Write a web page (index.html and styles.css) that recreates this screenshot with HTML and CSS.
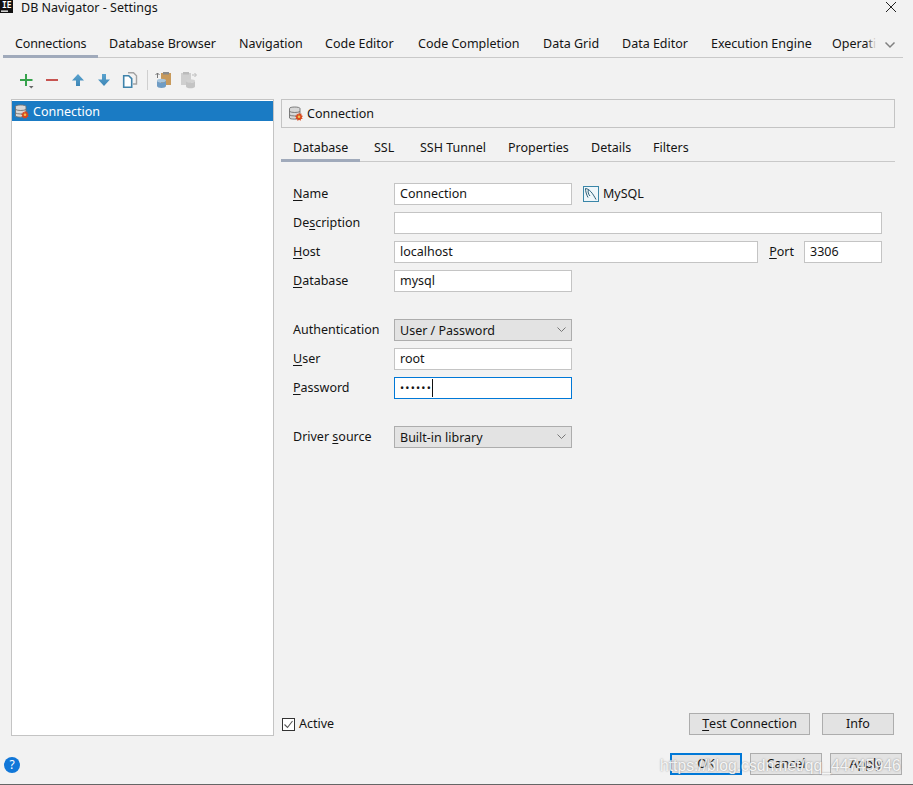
FILE: index.html
```html
<!DOCTYPE html>
<html lang="en">
<head>
<meta charset="utf-8">
<title>DB Navigator - Settings</title>
<link rel="stylesheet" href="styles.css">
</head>
<body>
<svg class="sprites" width="0" height="0">
  <defs>
    <linearGradient id="blue" x1="0" y1="0" x2="0" y2="1"><stop offset="0" stop-color="#5aa3cf"/><stop offset="1" stop-color="#3d86b6"/></linearGradient>
    <g id="db">
      <path d="M.5 2.500C.5.500 11 .500 11 2.500v9.500c0 1.500-10.500 1.500-10.500 0z" fill="#d8d8d8" stroke="#6f6f6f" stroke-width=".9"/>
      <path d="M.5 5.500c2 1.300 8.500 1.300 10.500 0M.5 9c2 1.300 8.500 1.300 10.500 0" stroke="#6f6f6f" stroke-width=".9" fill="none"/>
      <path d="M10 6.500l.9 1.600 1.700-.6-.3 1.800 1.700.7-1.300 1.200 1 1.500-1.800.2-.2 1.800-1.700-1-1.400 1.200-.4-1.800-1.800-.1.900-1.600-1.300-1.300 1.800-.5-.1-1.800 1.600.8z" fill="#d8481e"/>
      <circle cx="10" cy="10.800" r="1.300" fill="#f0c050"/>
    </g>
  </defs>
</svg>
<div class="dialog">
  <header class="titlebar">
    <svg class="app-logo" width="13" height="13" viewBox="0 0 13 13"><rect width="13" height="13" fill="#111"/><rect x="1" y="10.500" width="7" height="1.300" fill="#fff"/></svg>
    <span class="app-logo-text">IE</span>
    <span class="title">DB Navigator - Settings</span>
    <svg class="close" width="12" height="12" viewBox="0 0 12 12"><path d="M1 1l10 10M11 1L1 11" stroke="#222" stroke-width="1" fill="none"/></svg>
  </header>

  <nav class="tabs main-tabs">
    <span class="tab active">Connections</span>
    <span class="tab">Database Browser</span>
    <span class="tab">Navigation</span>
    <span class="tab">Code Editor</span>
    <span class="tab">Code Completion</span>
    <span class="tab">Data Grid</span>
    <span class="tab">Data Editor</span>
    <span class="tab">Execution Engine</span>
    <span class="tab faded">Operati</span>
    <svg class="more" width="12" height="8" viewBox="0 0 12 8"><path d="M1.500 1.500L6 6l4.500-4.500" stroke="#808080" stroke-width="1.500" fill="none"/></svg>
  </nav>

  <div class="toolbar">
    <svg class="ti" width="18" height="18" viewBox="0 0 18 18"><path d="M9 3v12M3 9h12.500" stroke="#36a24c" stroke-width="2"/><path d="M12 15h4.500l-2.250 2.500z" fill="#666"/></svg>
    <svg class="ti" width="18" height="18" viewBox="0 0 18 18"><path d="M3 9h12" stroke="#c75450" stroke-width="2"/></svg>
    <svg class="ti" width="18" height="18" viewBox="0 0 18 18"><path d="M9 3l6 6.500h-4V15H7V9.500H3z" fill="url(#blue)"/></svg>
    <svg class="ti" width="18" height="18" viewBox="0 0 18 18"><path d="M7 3h4v5.500h4L9 15 3 8.500h4z" fill="url(#blue)"/></svg>
    <svg class="ti" width="18" height="18" viewBox="0 0 18 18"><path d="M7 1.700h5.500l3 3V13H12" fill="none" stroke="#a2a2a2" stroke-width="1.400"/><path d="M2.700 4.700h5l3 3v8.600h-8z" fill="#fff" stroke="#3f83ab" stroke-width="1.600"/></svg>
    <span class="tool-sep"></span>
    <svg class="ti" width="18" height="18" viewBox="0 0 18 18"><rect x="6" y="2" width="10" height="12" fill="#c89a5c"/><rect x="8" y="1" width="6" height="2.500" fill="#8a8a8a"/><path d="M.5 4L2.500 2l2 2M2.500 2v5" stroke="#777" stroke-width="1" fill="none"/><ellipse cx="6.500" cy="9.500" rx="4.500" ry="1.800" fill="#a8c6de"/><path d="M2 9.500V15c0 1 2 2 4.500 2s4.500-1 4.500-2V9.500c0 1-2 2-4.500 2S2 10.500 2 9.500z" fill="#6f9cc4"/></svg>
    <svg class="ti" width="18" height="18" viewBox="0 0 18 18"><rect x="0" y="2" width="10" height="12" fill="#cfcfcf"/><rect x="2" y="1" width="6" height="2.500" fill="#bbb"/><path d="M11 4h4M13.500 2l2 2-2 2" stroke="#bbb" stroke-width="1" fill="none"/><ellipse cx="9.500" cy="10" rx="4.500" ry="1.800" fill="#d2d2d2"/><path d="M5 10v5.500c0 1 2 1.800 4.500 1.800s4.500-.8 4.500-1.800V10c0 1-2 1.800-4.500 1.800S5 11 5 10z" fill="#c4c4c4"/></svg>
  </div>

  <div class="body">
    <aside class="conn-list">
      <div class="conn-row">
        <svg class="db-icon" width="15" height="15" viewBox="0 0 15 15"><use href="#db"/></svg>
        <span class="conn-name">Connection</span>
      </div>
    </aside>

    <main class="detail">
      <div class="detail-head">
        <svg class="db-icon" width="15" height="15" viewBox="0 0 15 15"><use href="#db"/></svg>
        <span>Connection</span>
      </div>

      <nav class="tabs sub-tabs">
        <span class="tab active">Database</span>
        <span class="tab">SSL</span>
        <span class="tab">SSH Tunnel</span>
        <span class="tab">Properties</span>
        <span class="tab">Details</span>
        <span class="tab">Filters</span>
      </nav>

      <form class="form">
        <div class="row">
          <label class="lbl"><u>N</u>ame</label>
          <span class="field short">Connection</span>
          <svg class="mysql" width="16" height="16" viewBox="0 0 16 16"><rect x=".5" y=".5" width="15" height="15" fill="#eef6fa" stroke="#3a86a8"/><path d="M2.500 2.500c4 .5 7 4.500 10.500 11M2.500 2.500c0 3 1 6 2.500 9M5.500 3.500c-1 2 0 5 1.500 6.500" stroke="#2c5f78" stroke-width="1" fill="none"/></svg>
          <span class="dbtype">MySQL</span>
        </div>
        <div class="row">
          <label class="lbl">De<u>s</u>cription</label>
          <span class="field grow"></span>
        </div>
        <div class="row">
          <label class="lbl"><u>H</u>ost</label>
          <span class="field grow">localhost</span>
          <label class="lbl port-lbl"><u>P</u>ort</label>
          <span class="field port">3306</span>
        </div>
        <div class="row">
          <label class="lbl"><u>D</u>atabase</label>
          <span class="field short">mysql</span>
        </div>

        <div class="row section">
          <label class="lbl">Authentication</label>
          <span class="field short select"><span class="sel-text">User / Password</span><svg class="chev" width="9" height="6" viewBox="0 0 9 6"><path d="M.5.500L4.500 4.500 8.500.500" stroke="#777" fill="none"/></svg></span>
        </div>
        <div class="row">
          <label class="lbl"><u>U</u>ser</label>
          <span class="field short">root</span>
        </div>
        <div class="row">
          <label class="lbl"><u>P</u>assword</label>
          <span class="field short focus"><span class="dots">••••••</span><span class="caret"></span></span>
        </div>

        <div class="row section">
          <label class="lbl">Driver <u>s</u>ource</label>
          <span class="field short select"><span class="sel-text">Built-in library</span><svg class="chev" width="9" height="6" viewBox="0 0 9 6"><path d="M.5.500L4.500 4.500 8.500.500" stroke="#777" fill="none"/></svg></span>
        </div>
      </form>

      <div class="detail-foot">
        <label class="check"><svg width="13" height="13" viewBox="0 0 13 13"><rect x=".5" y=".5" width="12" height="12" fill="#fff" stroke="#333"/><path d="M2.500 6.500l3 3 5-6.500" stroke="#555" stroke-width="1.100" fill="none"/></svg>Active</label>
        <span class="btn test"><u>T</u>est Connection</span>
        <span class="btn info">Info</span>
      </div>
    </main>
  </div>

  <footer class="footer">
    <span class="help">?</span>
    <span class="btn act default">OK</span>
    <span class="btn act">Cancel</span>
    <span class="btn act">Apply</span>
    <span class="watermark">https://blog.csdn.net/qq_44745946</span>
  </footer>
</div>
</body>
</html>
```
FILE: styles.css
```css
* { box-sizing: border-box; }
html, body { margin: 0; padding: 0; }
body {
  width: 913px;
  height: 785px;
  overflow: hidden;
  background: #f2f2f2;
  color: #141414;
  font: 12.5px/16px "Noto Sans", sans-serif;
}
u { text-underline-offset: 2px; }
.sprites { position: absolute; }
.dialog {
  position: relative;
  display: flex;
  flex-direction: column;
  height: 785px;
  border-bottom: 1px solid #666;
}
.titlebar {
  position: relative;
  display: flex;
  align-items: flex-start;
  height: 30px;
  padding: 0 16px 0 0;
  flex: none;
}
.app-logo { flex: none; }
.app-logo-text {
  position: absolute;
  left: 2px;
  top: 1px;
  color: #fff;
  font: bold 8px/9px "DejaVu Sans Mono", monospace;
}
.title { margin: 0 0 0 8px; font-size: 12.5px; line-height: 15px; }
.close { margin: 1px 0 0 auto; }
.tabs { display: grid; flex: none; }
.tab { white-space: nowrap; }
.main-tabs {
  grid-template-columns: 106px 130px 86px 93px 125px 79px 89px 121px 52px 12px;
  height: 28px;
  margin: 0 10px 0 3px;
  border-bottom: 1px solid #c9c9c9;
}
.main-tabs .tab { padding-top: 6px; }
.main-tabs .tab.active {
  width: 95px;
  height: 28px;
  padding-left: 12px;
  letter-spacing: -.15px;
  border-bottom: 3px solid #a0aabb;
}
.faded { position: relative; }
.faded::after {
  content: "";
  position: absolute;
  top: 4px;
  right: 4px;
  width: 14px;
  height: 20px;
  background: linear-gradient(to right, rgba(242,242,242,0), #f2f2f2 75%);
}
.more { margin-top: 11px; }
.toolbar {
  display: flex;
  align-items: center;
  gap: 8px;
  height: 41px;
  padding: 3px 0 0 17px;
  flex: none;
}
.ti { flex: none; }
.tool-sep { width: 1px; height: 20px; margin-right: -1px; background: #cfcfcf; }
.body {
  display: flex;
  flex: 1;
  min-height: 0;
  padding: 0 18px 0 11px;
  gap: 7px;
}
.conn-list {
  width: 263px;
  height: 637px;
  padding-top: 1px;
  background: #fff;
  border: 1px solid #c4c4c4;
  flex: none;
}
.conn-row {
  display: flex;
  align-items: center;
  gap: 3px;
  height: 20px;
  padding-left: 3px;
  background: #1a7bc4;
  color: #fff;
}
.conn-name { padding-top: 1px; }
.detail {
  display: flex;
  flex-direction: column;
  flex: 1;
  min-width: 0;
  height: 637px;
}
.detail-head {
  display: flex;
  align-items: center;
  gap: 3px;
  height: 29px;
  padding-left: 7px;
  border: 1px solid #c4c4c4;
  flex: none;
}
.sub-tabs {
  grid-template-columns: 93px 46px 88px 83px 62px 1fr;
  height: 23px;
  margin-top: 11px;
  border-bottom: 1px solid #c9c9c9;
}
.sub-tabs .tab { padding-top: 1px; }
.sub-tabs .tab.active {
  width: 79px;
  height: 23px;
  padding-left: 12px;
  border-bottom: 3px solid #a0aabb;
}
.form {
  display: flex;
  flex-direction: column;
  gap: 7px;
  padding: 21px 13px 0 12px;
  flex: 1;
}
.row { display: flex; align-items: center; height: 22px; }
.row.section { margin-top: 20px; }
.lbl { width: 101px; flex: none; }
.port-lbl { width: auto; margin: 0 10px 0 11px; }
.field {
  display: flex;
  align-items: center;
  height: 22px;
  padding: 0 5px;
  background: #fff;
  border: 1px solid #c4c4c4;
}
.short { width: 178px; flex: none; }
.grow { flex: 1; min-width: 0; }
.port { width: 78px; flex: none; }
.select { background: #e3e3e3; border-color: #adadad; }
.sel-text { padding-top: 1px; }
.chev { margin-left: auto; }
.focus { border-color: #0078d7; }
.dots { letter-spacing: 1.2px; font-size: 11px; }
.caret { width: 1px; height: 18px; background: #111; }
.mysql { margin-left: 11px; flex: none; }
.dbtype { margin-left: 4px; }
.detail-foot {
  display: flex;
  align-items: center;
  gap: 12px;
  height: 22px;
  padding-right: 1px;
  flex: none;
  margin-bottom: 1px;
}
.check { display: flex; align-items: center; gap: 4px; margin-right: auto; padding-left: 1px; }
.btn {
  display: flex;
  align-items: center;
  justify-content: center;
  height: 22px;
  background: #e3e3e3;
  border: 1px solid #adadad;
}
.test { width: 121px; }
.info { width: 72px; }
.footer {
  position: relative;
  display: flex;
  align-items: center;
  justify-content: flex-end;
  gap: 8px;
  flex: none;
  height: 22px;
  margin: 1px 0 9px;
  padding: 0 11px 0 4px;
}
.help {
  width: 16px;
  height: 16px;
  margin: 2px auto 0 0;
  border-radius: 50%;
  background: #1177d8;
  color: #fff;
  font: 12px/16px "Noto Sans", sans-serif;
  text-align: center;
}
.act { width: 72px; }
.default { border: 2px solid #0078d7; }
.watermark {
  position: absolute;
  left: 660px;
  top: 3px;
  color: rgba(255,255,255,.88);
  text-shadow: 0 0 2px #8a8a8a;
  font: 15.7px/20px "Liberation Sans", sans-serif;
  white-space: nowrap;
}
```
